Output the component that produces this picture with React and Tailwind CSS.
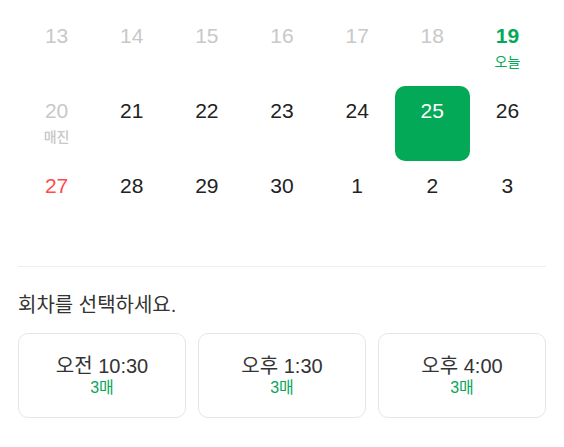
import React from "react";

const rows = [
  [
    { d: 13, tone: "past" },
    { d: 14, tone: "past" },
    { d: 15, tone: "past" },
    { d: 16, tone: "past" },
    { d: 17, tone: "past" },
    { d: 18, tone: "past" },
    { d: 19, tone: "today", note: "오늘" },
  ],
  [
    { d: 20, tone: "past", note: "매진" },
    { d: 21 },
    { d: 22 },
    { d: 23 },
    { d: 24 },
    { d: 25, tone: "selected" },
    { d: 26 },
  ],
  [
    { d: 27, tone: "holiday" },
    { d: 28 },
    { d: 29 },
    { d: 30 },
    { d: 1 },
    { d: 2 },
    { d: 3 },
  ],
];

const sessions = [
  { time: "오전 10:30", left: "3매" },
  { time: "오후 1:30", left: "3매" },
  { time: "오후 4:00", left: "3매" },
];

const numberColor = {
  past: "text-[#c8c8c8]",
  today: "text-[#03a957] font-bold",
  selected: "text-white",
  holiday: "text-[#ff4b4b]",
};

const DayCell = ({ day }) => {
  const selected = day.tone === "selected";
  return (
    <div
      className={`flex h-[75px] flex-col items-center pt-[11px] ${
        selected ? "rounded-[10px] bg-[#03a957]" : ""
      }`}
    >
      <span className={`text-[21px] leading-7 ${numberColor[day.tone] || "text-[#222]"}`}>
        {day.d}
      </span>
      {day.note && (
        <span
          className={`mt-[4px] text-[14px] leading-4 ${
            day.tone === "today" ? "text-[#03a957]" : "font-medium text-[#c8c8c8]"
          }`}
        >
          {day.note}
        </span>
      )}
    </div>
  );
};

const App = () => {
  return (
    <div
      className="min-h-[447px] bg-white px-[18px] pt-[11px]"
      style={{ fontFamily: '"Liberation Sans", "Noto Sans CJK KR", sans-serif' }}
    >
      {/* Calendar */}
      <div className="grid grid-cols-7 px-[1px]">
        {rows.flat().map((day, i) => (
          <DayCell key={i} day={day} />
        ))}
      </div>

      <div className="mt-[30px] h-px bg-[#eeeeee]" />

      {/* Sessions */}
      <p className="mt-[24px] text-[20px] leading-7 text-[#333]">회차를 선택하세요.</p>
      <div className="mt-[14px] grid grid-cols-3 gap-[12px]">
        {sessions.map((s) => (
          <button
            key={s.time}
            className="flex h-[85px] flex-col items-center justify-center rounded-[10px] border border-[#e6e6e6] bg-white"
          >
            <span className="text-[20px] leading-6 text-[#333]">{s.time}</span>
            <span className="text-[16px] leading-5 text-[#0aa55a]">{s.left}</span>
          </button>
        ))}
      </div>
    </div>
  );
};

export default App;
